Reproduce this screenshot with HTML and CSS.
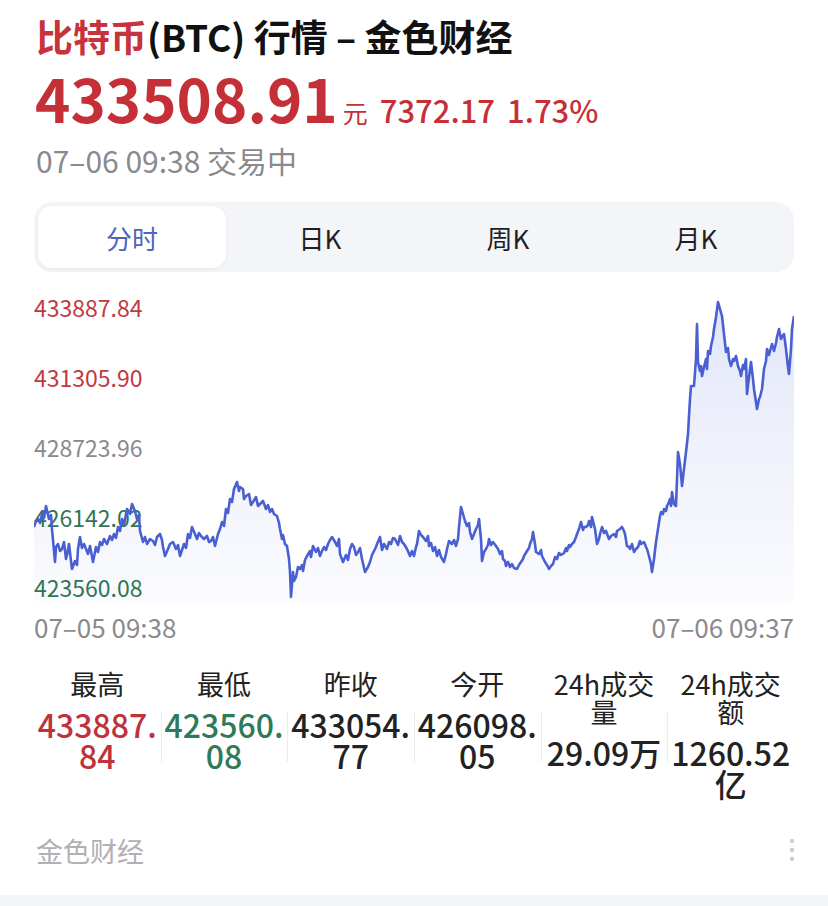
FILE: index.html
```html
<!DOCTYPE html>
<html lang="zh-CN">
<head>
<meta charset="utf-8">
<title>比特币(BTC) 行情 – 金色财经</title>
<link rel="stylesheet" href="styles.css">
</head>
<body>
<div class="page">
  <h1 class="title"><span class="red">比特币</span>(BTC) 行情 – 金色财经</h1>
  <div class="price-row">
    <span class="price">433508.91</span>
    <span class="unit">元</span>
    <span class="change">7372.17</span>
    <span class="change">1.73%</span>
  </div>
  <div class="time">07–06 09:38 交易中</div>

  <div class="tabs">
    <div class="tab active">分时</div>
    <div class="tab">日K</div>
    <div class="tab">周K</div>
    <div class="tab">月K</div>
  </div>

  <div class="chart">
    <svg class="chart-svg" viewBox="34 290 760 320" preserveAspectRatio="none" xmlns="http://www.w3.org/2000/svg">
      <defs>
        <linearGradient id="fillg" x1="0" y1="0" x2="0" y2="1">
          <stop offset="0" stop-color="#dfe3f7" stop-opacity="0.95"/>
          <stop offset="1" stop-color="#f7f8fd" stop-opacity="0.6"/>
        </linearGradient>
      </defs>
      <path fill="url(#fillg)" d="M34,528 L38,520 42,515 46,507 49,520 52,530 55,563 58,545 62,550 66,560 69,545 72,570 75,562 78,550 80,538 84,545 88,555 93,563 96,548 100,543 104,540 107,545 110,537 114,535 118,528 122,520 127,510 130,515 132,505 135,512 137,520 140,532 143,543 147,545 150,540 153,542 157,538 160,535 163,548 165,557 168,550 170,545 173,543 176,550 180,557 184,545 188,535 192,528 195,535 197,540 201,537 204,540 207,537 211,542 215,547 218,535 222,523 226,510 230,500 234,490 237,483 240,488 243,490 246,497 249,495 253,503 256,498 260,505 263,502 266,510 270,513 274,515 277,517 280,530 282,540 285,545 287,547 289,560 290,573 291,598 293,573 296,578 300,570 303,572 307,557 310,552 313,547 316,553 320,557 324,548 328,545 332,538 335,543 337,547 340,555 343,563 346,556 350,550 354,548 358,553 362,560 365,573 368,568 370,563 374,552 377,545 380,538 384,545 387,550 391,545 395,540 400,537 404,545 407,550 410,557 414,557 417,545 419,532 423,538 426,542 429,547 433,552 437,557 441,558 444,563 447,550 449,542 452,545 456,547 459,528 461,508 463,515 467,527 470,533 472,540 476,530 479,520 481,540 482,562 486,550 489,540 493,543 496,547 500,555 503,560 506,567 510,568 514,569 517,570 521,563 524,557 527,552 530,545 533,533 535,545 536,553 539,555 542,557 545,563 549,570 553,565 557,560 561,556 564,554 567,552 570,548 574,543 577,535 581,523 584,528 586,528 589,522 592,518 595,530 597,545 600,535 602,528 606,532 611,537 614,535 617,532 620,530 622,528 625,535 627,547 630,550 634,553 638,548 641,545 644,543 647,550 649,557 651,565 652,573 654,560 656,543 658,530 661,513 664,510 667,507 670,500 672,493 674,505 676,507 678,453 680,465 682,487 684,470 686,453 688,435 689,417 690,400 691,387 694,387 696,360 697,325 698,363 700,372 702,377 704,368 706,360 708,352 711,347 713,338 714,330 716,318 718,303 720,310 722,317 724,335 726,353 729,360 731,367 734,362 736,357 738,367 741,377 744,370 746,360 747,395 749,378 751,363 754,390 757,410 760,398 762,390 764,370 767,350 770,352 772,345 774,352 777,338 779,330 782,338 784,335 786,350 789,375 791,350 792,330 794,317 L794,602 L34,602 Z"/>
    </svg>
    <div class="chart-labels">
      <span class="lbl up">433887.84</span>
      <span class="lbl up">431305.90</span>
      <span class="lbl mid">428723.96</span>
      <span class="lbl down">426142.02</span>
      <span class="lbl down">423560.08</span>
    </div>
    <svg class="chart-svg" viewBox="34 290 760 320" preserveAspectRatio="none" xmlns="http://www.w3.org/2000/svg">
      <polyline fill="none" stroke="#4a60d2" stroke-width="2.6" stroke-linejoin="round" points="34,528 36,522 38,520 40,524 42,515 44,519 46,507 49,520 51,516 52,530 55,563 56,548 58,545 60,552 62,550 64,543 66,560 67,556 69,545 71,562 72,570 75,562 77,566 78,550 80,538 82,549 84,545 86,550 88,555 90,547 93,563 96,548 98,553 100,543 102,546 104,540 107,545 110,537 112,541 114,535 116,539 118,528 120,532 122,520 124,526 127,510 130,515 132,505 135,512 137,520 139,516 140,532 143,543 145,538 147,545 150,540 153,542 155,546 157,538 160,535 162,541 163,548 165,557 168,550 170,545 173,543 176,550 178,546 180,557 184,545 186,549 188,535 190,539 192,528 195,535 197,540 199,534 201,537 204,540 207,537 209,543 211,542 213,538 215,547 218,535 220,530 222,523 224,527 226,510 228,514 230,500 232,503 234,490 237,483 239,492 240,488 243,490 244,500 246,497 249,495 251,506 253,503 256,498 258,507 260,505 263,502 266,510 268,506 270,513 272,510 274,515 277,517 279,524 280,530 282,540 283,536 285,545 287,547 289,560 290,573 291,598 293,573 294,582 296,578 298,568 300,570 302,566 303,572 305,561 307,557 310,552 311,558 313,547 316,553 318,549 320,557 322,552 324,548 326,551 328,545 330,541 332,538 335,543 337,547 339,540 340,555 343,563 346,556 348,561 350,550 352,545 354,548 356,556 358,553 360,549 362,560 365,573 368,568 370,563 372,556 374,552 376,548 377,545 380,538 382,551 384,545 387,550 389,543 391,545 393,539 395,540 398,546 400,537 402,543 404,545 407,550 410,557 412,552 414,557 416,548 417,545 419,532 421,536 423,538 426,542 428,537 429,547 431,544 433,552 435,548 437,557 439,551 441,558 444,563 446,555 447,550 449,542 452,545 454,541 456,547 458,540 459,528 461,508 463,515 465,522 467,527 469,524 470,533 472,540 474,535 476,530 478,526 479,520 481,540 482,562 484,553 486,550 488,546 489,540 491,546 493,543 496,547 498,550 500,555 502,552 503,560 505,562 506,567 508,563 510,568 512,565 514,569 517,570 519,566 521,563 523,560 524,557 527,552 529,549 530,545 532,540 533,533 535,545 536,553 539,555 541,551 542,557 545,563 547,566 549,570 551,567 553,565 555,558 557,560 559,554 561,556 564,554 566,549 567,552 569,546 570,548 572,545 574,543 576,538 577,535 579,530 581,523 583,531 584,528 586,528 588,526 589,522 591,528 592,518 594,526 595,530 597,545 599,540 600,535 602,528 604,534 606,532 609,540 611,537 614,535 616,538 617,532 620,530 622,528 624,532 625,535 627,547 629,548 630,550 632,545 634,553 636,550 638,548 640,542 641,545 644,543 646,548 647,550 649,557 651,565 652,573 654,560 656,543 658,530 660,517 661,513 663,515 664,510 666,512 667,507 669,503 670,500 671,507 672,493 674,505 676,507 678,453 680,465 682,487 684,470 686,453 688,435 689,417 690,400 691,387 694,387 696,360 697,325 698,363 700,372 701,367 702,377 704,368 706,360 707,370 708,352 710,355 711,347 713,338 714,330 716,318 718,303 720,310 722,317 724,335 726,353 728,349 729,360 731,367 733,360 734,362 736,357 738,367 740,372 741,377 743,366 744,370 746,360 747,395 749,378 751,363 753,380 754,390 757,410 759,400 760,398 762,390 764,370 766,362 767,350 769,356 770,352 772,345 774,352 776,344 777,338 779,330 781,340 782,338 784,335 786,350 788,368 789,375 791,350 792,330 794,317"/>
    </svg>
  </div>
  <div class="axis">
    <span>07–05 09:38</span>
    <span>07–06 09:37</span>
  </div>

  <div class="stats">
    <div class="stat">
      <div class="stat-label">最高</div>
      <div class="stat-value up">433887.84</div>
    </div>
    <div class="stat">
      <div class="stat-label">最低</div>
      <div class="stat-value down">423560.08</div>
    </div>
    <div class="stat">
      <div class="stat-label">昨收</div>
      <div class="stat-value">433054.77</div>
    </div>
    <div class="stat">
      <div class="stat-label">今开</div>
      <div class="stat-value">426098.05</div>
    </div>
    <div class="stat">
      <div class="stat-label">24h成交量</div>
      <div class="stat-value">29.09万</div>
    </div>
    <div class="stat">
      <div class="stat-label">24h成交额</div>
      <div class="stat-value">1260.52亿</div>
    </div>
  </div>
</div>

<div class="footer">
  <span class="brand">金色财经</span>
  <svg class="kebab" width="6" height="24" viewBox="0 0 6 24" xmlns="http://www.w3.org/2000/svg">
    <circle cx="3" cy="3" r="2.2" fill="#cfcfd3"/>
    <circle cx="3" cy="12" r="2.2" fill="#cfcfd3"/>
    <circle cx="3" cy="21" r="2.2" fill="#cfcfd3"/>
  </svg>
</div>
<div class="strip"></div>
</body>
</html>
```

FILE: styles.css
```css
html, body {
  margin: 0;
  padding: 0;
  background: #ffffff;
}

body {
  font-family: "Noto Sans CJK SC", "Noto Sans", sans-serif;
  color: #1c1c1e;
}

.page {
  padding: 13px 34px 0 34px;
}

.title {
  margin: 0;
  padding-left: 2px;
  font-size: 37px;
  line-height: 46px;
  font-weight: 700;
  color: #111;
}

.red {
  color: #c8323c;
}

.price-row {
  display: flex;
  align-items: baseline;
  margin-top: 3px;
  padding-left: 1px;
  height: 70px;
  line-height: 70px;
  color: #c52f37;
}

.price {
  font-size: 60px;
  font-weight: 700;
}

.unit {
  font-size: 25px;
  margin-left: 5px;
}

.change {
  font-size: 31px;
  font-weight: 500;
  margin-left: 12px;
}

.time {
  margin-top: 10px;
  padding-left: 2px;
  font-size: 30px;
  line-height: 36px;
  color: #8a8a8e;
}

.tabs {
  margin-top: 24px;
  height: 70px;
  box-sizing: border-box;
  padding: 4px;
  border-radius: 18px;
  background: #f4f5f9;
  display: grid;
  grid-template-columns: repeat(4, 1fr);
}

.tab {
  display: flex;
  align-items: center;
  justify-content: center;
  font-size: 26px;
  color: #1f1f1f;
  border-radius: 14px;
}

.tab.active {
  background: #ffffff;
  color: #4f64c0;
  box-shadow: 0 1px 4px rgba(40, 50, 90, 0.07);
}

.chart {
  margin-top: 17px;
  height: 320px;
  display: grid;
}

.chart > * {
  grid-area: 1 / 1;
}

.chart-labels {
  display: flex;
  flex-direction: column;
  justify-content: space-between;
  padding: 4px 0 8px 0;
  font-size: 23px;
  line-height: 28px;
}

.lbl.up { color: #c0393f; }
.lbl.mid { color: #8a8a8e; }
.lbl.down { color: #2f7655; }

.chart-svg {
  display: block;
  width: 760px;
  height: 320px;
}

.axis {
  display: flex;
  justify-content: space-between;
  margin-top: 3px;
  font-size: 26px;
  line-height: 30px;
  color: #8a8a8e;
}

.stats {
  margin-top: 28px;
  display: grid;
  grid-template-columns: repeat(6, 1fr);
}

.stat {
  position: relative;
  padding: 0;
  text-align: center;
  word-break: break-all;
}

.stat + .stat::before {
  content: "";
  position: absolute;
  left: 0;
  top: 42px;
  width: 1px;
  height: 50px;
  background: #ececec;
}

.stat-label {
  font-size: 27px;
  line-height: 28px;
  color: #222;
}

.stat-value {
  margin-top: 11px;
  font-size: 32px;
  line-height: 31px;
  font-weight: 500;
  color: #222;
}

.stat-value.up { color: #c0323b; }
.stat-value.down { color: #2f7a57; }

.footer {
  display: flex;
  justify-content: space-between;
  align-items: center;
  margin-top: 31px;
  padding: 0 33px 0 36px;
  height: 40px;
  font-size: 27px;
  color: #b0b0b5;
}

.kebab {
  display: block;
}

.strip {
  margin-top: 25px;
  height: 20px;
  background: #f4f5f9;
}
```
